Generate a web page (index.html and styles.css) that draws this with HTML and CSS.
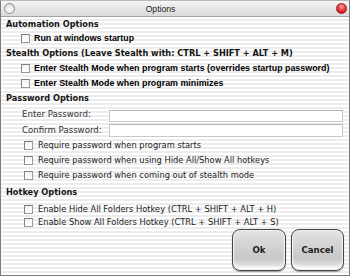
FILE: index.html
```
<!DOCTYPE html>
<html>
<head>
<meta charset="utf-8">
<link rel="stylesheet" href="styles.css">
</head>
<body>
<div class="window">
  <div class="titlebar">
    <span class="light grey"></span>
    <span class="title">Options</span>
    <span class="light red"></span>
  </div>
  <div class="content">
    <div class="hdr h14">Automation Options</div>
    <div class="opt s1 h14"><span class="box"></span><span class="lbl-b">Run at windows startup</span></div>
    <div class="hdr h16">Stealth Options (Leave Stealth with: CTRL + SHIFT + ALT + M)</div>
    <div class="opt s1 h15"><span class="box"></span><span class="lbl-b">Enter Stealth Mode when program starts (overrides startup password)</span></div>
    <div class="opt s1 h14"><span class="box"></span><span class="lbl-b">Enter Stealth Mode when program minimizes</span></div>
    <div class="hdr h17">Password Options</div>
    <div class="field f1"><span class="flabel">Enter Password:</span><span class="input"></span></div>
    <div class="field f2"><span class="flabel">Confirm Password:</span><span class="input"></span></div>
    <div class="opt s2 h16"><span class="box"></span><span class="lbl">Require password when program starts</span></div>
    <div class="opt s2 h15"><span class="box"></span><span class="lbl">Require password when using Hide All/Show All hotkeys</span></div>
    <div class="opt s2 h14"><span class="box"></span><span class="lbl">Require password when coming out of stealth mode</span></div>
    <div class="hdr h20">Hotkey Options</div>
    <div class="opt s2 h14"><span class="box"></span><span class="lbl">Enable Hide All Folders Hotkey (CTRL + SHIFT + ALT + H)</span></div>
    <div class="opt s2 h13"><span class="box"></span><span class="lbl">Enable Show All Folders Hotkey (CTRL + SHIFT + ALT + S)</span></div>
    <div class="buttons">
      <div class="btn ok">Ok</div>
      <div class="btn cancel">Cancel</div>
    </div>
  </div>
</div>
</body>
</html>
```
FILE: styles.css
```
html, body {
  margin: 0;
  padding: 0;
  background: #ffffff;
}
.window {
  box-sizing: border-box;
  width: 350px;
  height: 276px;
  border: 1px solid #7c7c7c;
  border-top-color: #b8b8b8;
  background: repeating-linear-gradient(to bottom, #ffffff 0, #ffffff 2px, #ececec 2px, #ececec 4px);
  display: flex;
  flex-direction: column;
}
.titlebar {
  box-sizing: border-box;
  height: 16px;
  border-bottom: 1px solid #a4a4a4;
  background: linear-gradient(to bottom, #f6f6f6, #e4e4e4 60%, #dadada);
  display: flex;
  align-items: center;
  padding: 0 2px 0 3px;
}
.title {
  flex: 1;
  text-align: center;
  padding-right: 30px;
  font-family: "Liberation Sans", Arial, sans-serif;
  font-size: 8.6px;
  color: #222;
}
.light {
  display: block;
  box-sizing: border-box;
  width: 11px;
  height: 11px;
  border-radius: 50%;
}
.light.grey {
  border: 1px solid #8a8a8a;
  background: radial-gradient(circle at 50% 70%, #ffffff, #e2e2e2 70%, #cfcfcf);
}
.light.red {
  border: 1px solid #9a2020;
  background: radial-gradient(circle at 50% 30%, #ffb0b0 0, #f05050 35%, #d01818 75%, #b01010);
}
.content {
  flex: 1;
  padding-left: 4px;
}
.hdr {
  font-family: "DejaVu Sans", Verdana, sans-serif;
  font-weight: bold;
  font-size: 8.2px;
  color: #151515;
  padding-left: 1px;
  white-space: nowrap;
}
.h13 { height: 13px; line-height: 13px; }
.h14 { height: 14px; line-height: 14px; }
.h15 { height: 15px; line-height: 15px; }
.h16 { height: 16px; line-height: 16px; }
.h17 { height: 17px; line-height: 17px; }
.h20 { height: 20px; line-height: 20px; }
.opt {
  display: flex;
  align-items: center;
  white-space: nowrap;
}
.opt.s1 { padding-left: 16px; }
.opt.s2 { padding-left: 19px; }
.box {
  display: block;
  box-sizing: border-box;
  width: 9px;
  height: 9px;
  border: 1px solid #9a9a9a;
  border-top-color: #7e7e7e;
  border-left-color: #868686;
  background: linear-gradient(to bottom, #f2f2f2, #ffffff);
  flex: none;
}
.s1 .box { margin-right: 4px; }
.s2 .box { margin-right: 5px; }
.lbl-b {
  font-family: "Liberation Sans", Arial, sans-serif;
  font-weight: bold;
  font-size: 8.9px;
  color: #000;
}
.lbl {
  font-family: "DejaVu Sans", Verdana, sans-serif;
  font-size: 8.3px;
  color: #222;
}
.field {
  display: flex;
  align-items: center;
  height: 15px;
  padding-left: 17px;
  padding-right: 6px;
}
.flabel {
  width: 87px;
  flex: none;
  font-family: "DejaVu Sans", Verdana, sans-serif;
  font-size: 8.6px;
  color: #333;
  white-space: nowrap;
}
.input {
  flex: 1;
  box-sizing: border-box;
  background: #ffffff;
  border: 1px solid #c8c8c8;
  border-top-color: #b4b4b4;
}
.f1 .input { height: 12px; margin-top: 2px; }
.f2 .input { height: 13px; margin-top: 1px; }
.f1 .flabel { margin-top: -1px; }
.buttons {
  display: flex;
  justify-content: flex-end;
  gap: 5px;
  padding-right: 5px;
}
.btn {
  box-sizing: border-box;
  height: 42px;
  border: 1px solid #454545;
  border-radius: 8px;
  background: linear-gradient(to bottom, #e4e4e4 0, #d6d6d6 30%, #c8c8c8 70%, #d2d2d2 80%, #f2f2f2 100%);
  box-shadow: inset 0 0 0 1px #f0f0f0, inset 0 -3px 3px #ffffff, 0 1px 1px rgba(0,0,0,0.35);
  display: flex;
  align-items: center;
  justify-content: center;
  font-family: "DejaVu Sans", Verdana, sans-serif;
  font-weight: bold;
  font-size: 8.6px;
  color: #1e1e1e;
}
.btn.ok { width: 54px; }
.btn.cancel { width: 53px; }
```
